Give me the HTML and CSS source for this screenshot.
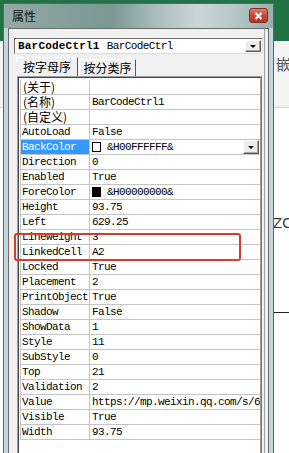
FILE: index.html
```html
<!DOCTYPE html>
<html lang="zh-CN">
<head>
  <meta charset="UTF-8">
  <meta name="viewport" content="width=device-width, initial-scale=1.0">
  <title>属性</title>
  <link rel="stylesheet" href="styles.css">
</head>
<body>
<div class="sheet">
  <div class="ribbon"></div>
  <div class="ribbon-tools"><span class="ribbon-char">嵌</span></div>
  <div class="cells">
    <div class="cell-text">ZO</div>
    <div class="cell-line"></div>
  </div>
</div>

<div class="window">
  <div class="titlebar">
    <span class="title">属性</span>
    <span class="close">
      <svg width="9" height="8" viewBox="0 0 9 8"><path d="M1.5 1 L7.5 7 M7.5 1 L1.5 7" stroke="#fff" stroke-width="2"/></svg>
    </span>
  </div>
  <div class="client">
    <div class="combo">
      <span class="combo-name">BarCodeCtrl1</span>
      <span class="combo-type">BarCodeCtrl</span>
      <span class="drop"><i class="arrow"></i></span>
    </div>
    <div class="tabs">
      <div class="tab active">按字母序</div>
      <div class="tab">按分类序</div>
    </div>
    <div class="grid">
      <div class="rows">
        <div class="row"><div class="name cjk">(关于)</div><div class="value"></div></div>
        <div class="row"><div class="name cjk">(名称)</div><div class="value">BarCodeCtrl1</div></div>
        <div class="row"><div class="name cjk">(自定义)</div><div class="value"></div></div>
        <div class="row"><div class="name">AutoLoad</div><div class="value">False</div></div>
        <div class="row"><div class="name selected">BackColor</div><div class="value"><span class="swatch"></span>&amp;H00FFFFFF&amp;<span class="drop cell-drop"><i class="arrow"></i></span></div></div>
        <div class="row"><div class="name">Direction</div><div class="value">0</div></div>
        <div class="row"><div class="name">Enabled</div><div class="value">True</div></div>
        <div class="row"><div class="name">ForeColor</div><div class="value"><span class="swatch dark"></span>&amp;H00000000&amp;</div></div>
        <div class="row"><div class="name">Height</div><div class="value">93.75</div></div>
        <div class="row"><div class="name">Left</div><div class="value">629.25</div></div>
        <div class="row"><div class="name">LineWeight</div><div class="value">3</div></div>
        <div class="row"><div class="name">LinkedCell</div><div class="value">A2</div></div>
        <div class="row"><div class="name">Locked</div><div class="value">True</div></div>
        <div class="row"><div class="name">Placement</div><div class="value">2</div></div>
        <div class="row"><div class="name">PrintObject</div><div class="value">True</div></div>
        <div class="row"><div class="name">Shadow</div><div class="value">False</div></div>
        <div class="row"><div class="name">ShowData</div><div class="value">1</div></div>
        <div class="row"><div class="name">Style</div><div class="value">11</div></div>
        <div class="row"><div class="name">SubStyle</div><div class="value">0</div></div>
        <div class="row"><div class="name">Top</div><div class="value">21</div></div>
        <div class="row"><div class="name">Validation</div><div class="value">2</div></div>
        <div class="row"><div class="name">Value</div><div class="value">https://mp.weixin.qq.com/s/6ZqR1</div></div>
        <div class="row"><div class="name">Visible</div><div class="value">True</div></div>
        <div class="row"><div class="name">Width</div><div class="value">93.75</div></div>
      </div>
    </div>
  </div>
</div>

<div class="mark"></div>
</body>
</html>
```

FILE: styles.css
```css
html, body {
  margin: 0;
  padding: 0;
  width: 289px;
  height: 453px;
  overflow: hidden;
  font-family: 'Liberation Mono', monospace;
}
body {
  position: relative;
  background: #fff;
}

/* spreadsheet behind the dialog */
.sheet {
  display: flex;
  flex-direction: column;
  height: 453px;
}
.ribbon {
  height: 41px;
  background: #217346;
}
.ribbon-tools {
  height: 67px;
  box-sizing: border-box;
  background: #f3f3f3;
  border-bottom: 1px solid #d4d4d4;
  padding: 15px 0 0 276px;
}
.ribbon-char {
  font-family: 'Noto Sans CJK SC', sans-serif;
  font-size: 15px;
  line-height: 16px;
  color: #555;
}
.cells {
  flex: 1;
  padding: 107px 0 0 273px;
  background: #fff;
}
.cell-text {
  font-family: 'Liberation Sans', sans-serif;
  font-size: 15px;
  line-height: 16px;
  color: #333;
}
.cell-line {
  margin-top: 81px;
  height: 1px;
  background: #222;
}

/* properties window */
.window {
  position: absolute;
  left: 3px;
  top: 3px;
  width: 271px;
  height: 470px;
  box-sizing: border-box;
  display: flex;
  flex-direction: column;
  border: 1px solid #56686c;
  padding: 0 4px;
  background:
    linear-gradient(90deg, #93aaa5 0%, #849f99 22%, #7b9891 40%, #a6bab7 55%, #cbd7d6 72%, #b7c8c6 85%, #98b0ac 100%) top / 100% 24px no-repeat,
    #c4d3dc;
}
.titlebar {
  height: 24px;
  display: flex;
  align-items: flex-start;
  justify-content: space-between;
}
.title {
  margin: 4px 0 0 4px;
  font-family: 'Noto Sans CJK SC', sans-serif;
  font-size: 12px;
  line-height: 16px;
  color: #111;
}
.close {
  margin: 4px 1px 0 0;
  width: 19px;
  height: 15px;
  box-sizing: border-box;
  border: 1px solid #7b3128;
  border-radius: 3px;
  background: linear-gradient(#e07a6c, #c8483a 50%, #b63526);
  display: flex;
  align-items: center;
  justify-content: center;
}
.close svg {
  display: block;
}

.client {
  flex: 1;
  display: flex;
  flex-direction: column;
  background: #f0f0f0;
  border: 1px solid #6a6a6a;
  padding: 9px 5px 0 5px;
  box-shadow: inset -3px 0 0 #f0f0f0, inset -4px 0 0 #a0a0a0;
}

.combo {
  height: 16px;
  box-sizing: border-box;
  display: flex;
  align-items: center;
  gap: 7px;
  padding-left: 3px;
  background: #fff;
  border: 1px solid;
  border-color: #6e6e6e #dcdcdc #dcdcdc #6e6e6e;
  font-size: 11px;
  line-height: 14px;
  letter-spacing: -0.6px;
  color: #000;
}
.combo-name {
  font-weight: bold;
  letter-spacing: 0.2px;
}
.drop {
  margin-left: auto;
  width: 16px;
  height: 12px;
  box-sizing: border-box;
  display: flex;
  align-items: center;
  justify-content: center;
  background: #ececec;
  border: 1px solid;
  border-color: #fff #555 #555 #fff;
  box-shadow: inset -1px -1px 0 #a8a8a8;
}
.combo .drop {
  margin-right: 1px;
}
.arrow {
  width: 0;
  height: 0;
  border-left: 3px solid transparent;
  border-right: 3px solid transparent;
  border-top: 3px solid #000;
}

.tabs {
  height: 20px;
  margin-top: 2px;
  display: flex;
  align-items: flex-end;
  padding-left: 2px;
}
.tab {
  height: 17px;
  box-sizing: border-box;
  display: flex;
  justify-content: center;
  border: 1px solid;
  border-bottom: none;
  border-color: #fff #555 #555 #fff;
  font-family: 'Noto Sans CJK SC', sans-serif;
  font-size: 12px;
  line-height: 16px;
  white-space: nowrap;
  color: #000;
}
.tab.active {
  height: 19px;
  width: 62px;
  padding-top: 1px;
}
.tab + .tab {
  width: 57px;
  margin-left: 1px;
}

.grid {
  flex: 1;
  margin: 0 1px 0 3px;
  border: 1px solid;
  border-color: #a0a0a0 #7a7a7a #fff #a0a0a0;
}
.rows {
  height: 100%;
  box-sizing: border-box;
  background: #fff;
  border: 1px solid;
  border-color: #444 #9a9a9a #e3e3e3 #444;
  padding: 2px 0 0 1px;
}
.row {
  height: 15px;
  box-sizing: border-box;
  display: flex;
  border-bottom: 1px solid #c4c4c4;
  border-left: 1px solid #c4c4c4;
  font-size: 11px;
  line-height: 14px;
  letter-spacing: -0.6px;
  color: #000;
}
.name {
  width: 69px;
  flex-shrink: 0;
  box-sizing: border-box;
  padding-left: 1px;
  border-right: 1px solid #c4c4c4;
  white-space: nowrap;
  overflow: hidden;
}
.name.cjk {
  font-family: 'Noto Sans CJK SC', sans-serif;
  font-size: 12px;
  line-height: 14px;
  letter-spacing: 0;
  padding-left: 2px;
  overflow: visible;
}
.name.selected {
  background: #3399ff;
  color: #fff;
}
.value {
  flex: 1;
  min-width: 0;
  display: flex;
  align-items: center;
  padding-left: 2px;
  white-space: nowrap;
  overflow: hidden;
}
.swatch {
  width: 9px;
  height: 10px;
  box-sizing: border-box;
  flex-shrink: 0;
  margin-right: 6px;
  border: 1px solid #000;
  background: #fff;
}
.swatch.dark {
  background: #000;
}
.cell-drop {
  height: 14px;
  margin-right: 1px;
}

/* highlight drawn over the LineWeight / LinkedCell rows */
.mark {
  position: absolute;
  left: 14px;
  top: 233px;
  width: 227px;
  height: 28px;
  box-sizing: border-box;
  border: 2px solid #d43b31;
  border-radius: 3px;
}
```
